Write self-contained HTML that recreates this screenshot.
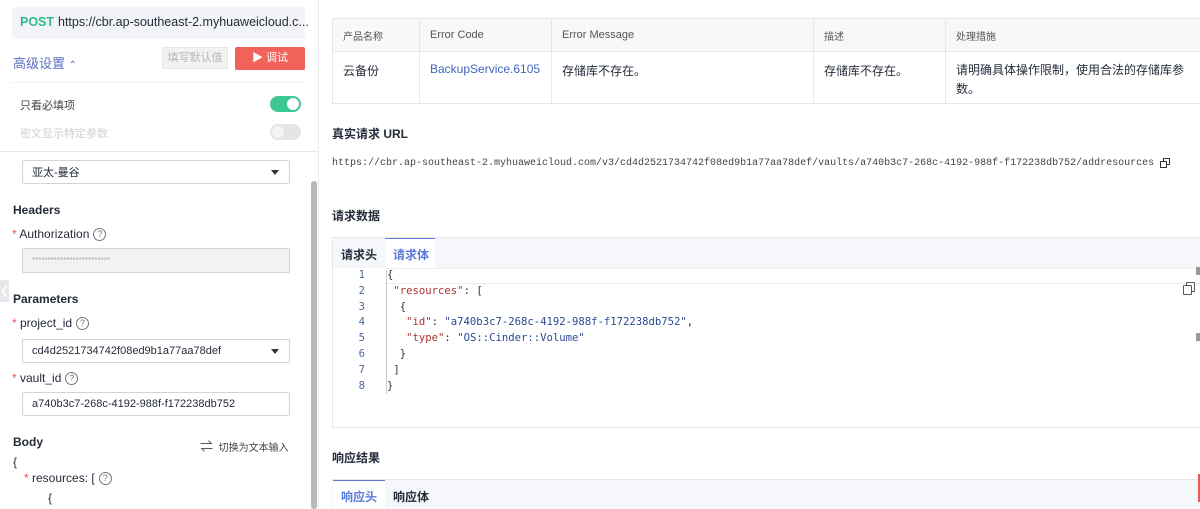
<!DOCTYPE html>
<html><head><meta charset="utf-8"><style>
*{box-sizing:border-box;margin:0;padding:0}
body{width:1200px;height:509px;overflow:hidden;background:#fff;font-family:"Liberation Sans","Noto Sans CJK SC",sans-serif;color:#252b3a;position:relative}
.a{position:absolute;white-space:nowrap}
.cn{font-size:12px}
.t{font-size:12px;color:#252b3a}
.star{color:#e5534b;font-size:12px}
.q{display:inline-block;width:13px;height:13px;border:1px solid #777;border-radius:50%;font-size:9px;text-align:center;line-height:11px;color:#777;vertical-align:1px;margin-left:4px}
.inp{position:absolute;border:1px solid #cfd3da;border-radius:2px;background:#fff;font-size:11px;padding-left:9px;display:flex;align-items:center}
.caret{position:absolute;right:10px;top:50%;margin-top:-2px;border-left:4px solid transparent;border-right:4px solid transparent;border-top:5px solid #333}
.mono{font-family:"Liberation Mono","DejaVu Sans Mono",monospace}
td{border:1px solid #e4e7ec;font-size:12px;vertical-align:top;padding:0 10px}
.code{font-family:"DejaVu Sans Mono",monospace;font-size:10.6px;line-height:15.8px}
.cp{position:absolute;width:9px;height:10px;border:1px solid #555;border-radius:1px;background:#fff}
</style></head><body>
<div class="a" style="left:12px;top:7px;width:293px;height:32px;background:#f2f4f7;border-radius:3px"></div>
<div class="a" style="left:20px;top:15px;font-size:12.5px;font-weight:bold;color:#2fb98a">POST</div>
<div class="a" style="left:58px;top:15px;font-size:12.5px;color:#252b3a">https://cbr.ap-southeast-2.myhuaweicloud.c...</div>
<div class="a cn" style="left:13px;top:53px;color:#5a6fc4;font-size:13px">高级设置 <span style="font-size:10px">⌃</span></div>
<div class="a cn" style="left:162px;top:47px;width:66px;height:22px;background:#f2f2f2;border:1px solid #e6e6e6;color:#b8b8b8;font-size:11px;text-align:center;line-height:20px">填写默认值</div>
<div class="a cn" style="left:235px;top:47px;width:70px;height:23px;background:#f0625a;border-radius:2px;color:#fff;font-size:11px;text-align:center;line-height:23px">▶ 调试</div>
<div class="a" style="left:12px;top:82px;width:293px;height:1px;background:#f0f0f0"></div>
<div class="a cn" style="left:20px;top:97px;font-size:11px;color:#444">只看必填项</div>
<div class="a" style="left:270px;top:96px;width:31px;height:16px;border-radius:8px;background:#3cc692"><div style="position:absolute;right:2px;top:2px;width:12px;height:12px;border-radius:50%;background:#fff"></div></div>
<div class="a cn" style="left:20px;top:125px;font-size:11px;color:#d0d0d0">密文显示特定参数</div>
<div class="a" style="left:270px;top:124px;width:31px;height:16px;border-radius:8px;background:#e4e4e4"><div style="position:absolute;left:2px;top:2px;width:12px;height:12px;border-radius:50%;background:#f5f5f5"></div></div>
<div class="a" style="left:0;top:151px;width:318px;height:1px;background:#e8e8e8"></div>
<div class="inp cn" style="left:22px;top:160px;width:268px;height:24px">亚太-曼谷<div class="caret"></div></div>
<div class="a" style="left:13px;top:203px;font-size:12px;font-weight:bold">Headers</div>
<div class="a t" style="left:12px;top:227px"><span class="star">*</span> Authorization<span class="q">?</span></div>
<div class="inp" style="left:22px;top:248px;width:268px;height:25px;background:#f2f2f2;color:#aaa;font-size:8px">*************************</div>
<div class="a" style="left:0;top:280px;width:9px;height:22px;background:#e8e8ea;color:#fff;font-size:11px;line-height:22px">❮</div>
<div class="a" style="left:13px;top:292px;font-size:12px;font-weight:bold">Parameters</div>
<div class="a t" style="left:12px;top:316px"><span class="star">*</span> project_id<span class="q">?</span></div>
<div class="inp" style="left:22px;top:339px;width:268px;height:24px">cd4d2521734742f08ed9b1a77aa78def<div class="caret"></div></div>
<div class="a t" style="left:12px;top:371px"><span class="star">*</span> vault_id<span class="q">?</span></div>
<div class="inp" style="left:22px;top:392px;width:268px;height:24px">a740b3c7-268c-4192-988f-f172238db752</div>
<div class="a" style="left:13px;top:435px;font-size:12px;font-weight:bold">Body</div>
<div class="a cn" style="left:200px;top:436px;font-size:10px;color:#444"><span style="font-size:13px">⇌</span>&nbsp; 切换为文本输入</div>
<div class="a t" style="left:13px;top:455px">{</div>
<div class="a t" style="left:24px;top:471px"><span class="star">*</span> resources: [<span class="q">?</span></div>
<div class="a t" style="left:48px;top:491px">{</div>
<div class="a" style="left:311px;top:181px;width:6px;height:328px;background:#b8b8bc;border-radius:3px"></div>
<div class="a" style="left:318px;top:0;width:1px;height:509px;background:#ececec"></div>
<table class="a" style="left:332px;top:18px;border-collapse:collapse;width:870px;white-space:normal">
<tr style="height:33px;background:#f7f8fa;color:#555"><td style="width:87px;vertical-align:middle;font-size:10px">产品名称</td><td style="width:132px;vertical-align:middle;font-size:11px">Error Code</td><td style="width:262px;vertical-align:middle;font-size:11px">Error Message</td><td style="width:132px;vertical-align:middle;font-size:10px">描述</td><td style="vertical-align:middle;font-size:10px">处理措施</td></tr>
<tr style="height:52px"><td style="padding-top:10px">云备份</td><td style="padding-top:10px;color:#4466bb">BackupService.6105</td><td style="padding-top:10px">存储库不存在。</td><td style="padding-top:10px">存储库不存在。</td><td style="padding-top:9px;line-height:19px">请明确具体操作限制，使用合法的存储库参数。</td></tr>
</table>
<div class="a" style="left:332px;top:125px;font-size:12px;font-weight:bold">真实请求 URL</div>
<div class="a mono" style="left:332px;top:158px;font-size:10px;color:#444">https://cbr.ap-southeast-2.myhuaweicloud.com/v3/cd4d2521734742f08ed9b1a77aa78def/vaults/a740b3c7-268c-4192-988f-f172238db752/addresources</div>
<div class="a" style="left:1163px;top:158px;width:7px;height:7px;border:1.5px solid #333"></div>
<div class="a" style="left:1160px;top:161px;width:7px;height:7px;border:1.5px solid #333;background:#fff"></div>
<div class="a" style="left:332px;top:207px;font-size:12px;font-weight:bold">请求数据</div>
<div class="a" style="left:332px;top:237px;width:870px;height:191px;border:1px solid #e8e8e8;background:#fff"></div>
<div class="a" style="left:333px;top:238px;width:869px;height:30px;background:#f5f7fa"></div>
<div class="a" style="left:385px;top:238px;width:50px;height:30px;background:#fff;border-top:1px solid #5a7bd8"></div>
<div class="a cn" style="left:341px;top:246px;font-weight:bold">请求头</div>
<div class="a cn" style="left:393px;top:246px;font-weight:bold;color:#5a7bd8">请求体</div>
<div class="a" style="left:385px;top:268px;width:815px;height:16px;border-top:1px solid #eee;border-bottom:1px solid #eee"></div>
<div class="cp" style="left:1186px;top:282px"></div>
<div class="cp" style="left:1183px;top:285px"></div>
<div class="a" style="left:1196px;top:267px;width:4px;height:8px;background:#999"></div>
<div class="a" style="left:1196px;top:333px;width:4px;height:8px;background:#999"></div>
<div class="a code" style="left:345px;top:268px;width:20px;text-align:right;color:#4a6aa0">1<br>2<br>3<br>4<br>5<br>6<br>7<br>8</div>
<div class="a" style="left:386px;top:270px;width:1px;height:124px;background:#ccc"></div>
<div class="a code" style="left:387px;top:268px;color:#333;white-space:pre">{
 <span style="color:#a33">"resources"</span>: [
  {
   <span style="color:#a33">"id"</span>: <span style="color:#2a4a90">"a740b3c7-268c-4192-988f-f172238db752"</span>,
   <span style="color:#a33">"type"</span>: <span style="color:#2a4a90">"OS::Cinder::Volume"</span>
  }
 ]
}</div>
<div class="a" style="left:332px;top:449px;font-size:12px;font-weight:bold">响应结果</div>
<div class="a" style="left:332px;top:479px;width:870px;height:30px;background:#f5f7fa;border-top:1px solid #e8e8e8"></div>
<div class="a" style="left:333px;top:480px;width:52px;height:29px;background:#fff;border-top:1px solid #5a7bd8"></div>
<div class="a cn" style="left:341px;top:488px;font-weight:bold;color:#5a7bd8">响应头</div>
<div class="a cn" style="left:393px;top:488px;font-weight:bold">响应体</div>
<div class="a" style="left:1198px;top:474px;width:2px;height:28px;background:#e55"></div>
</body></html>
